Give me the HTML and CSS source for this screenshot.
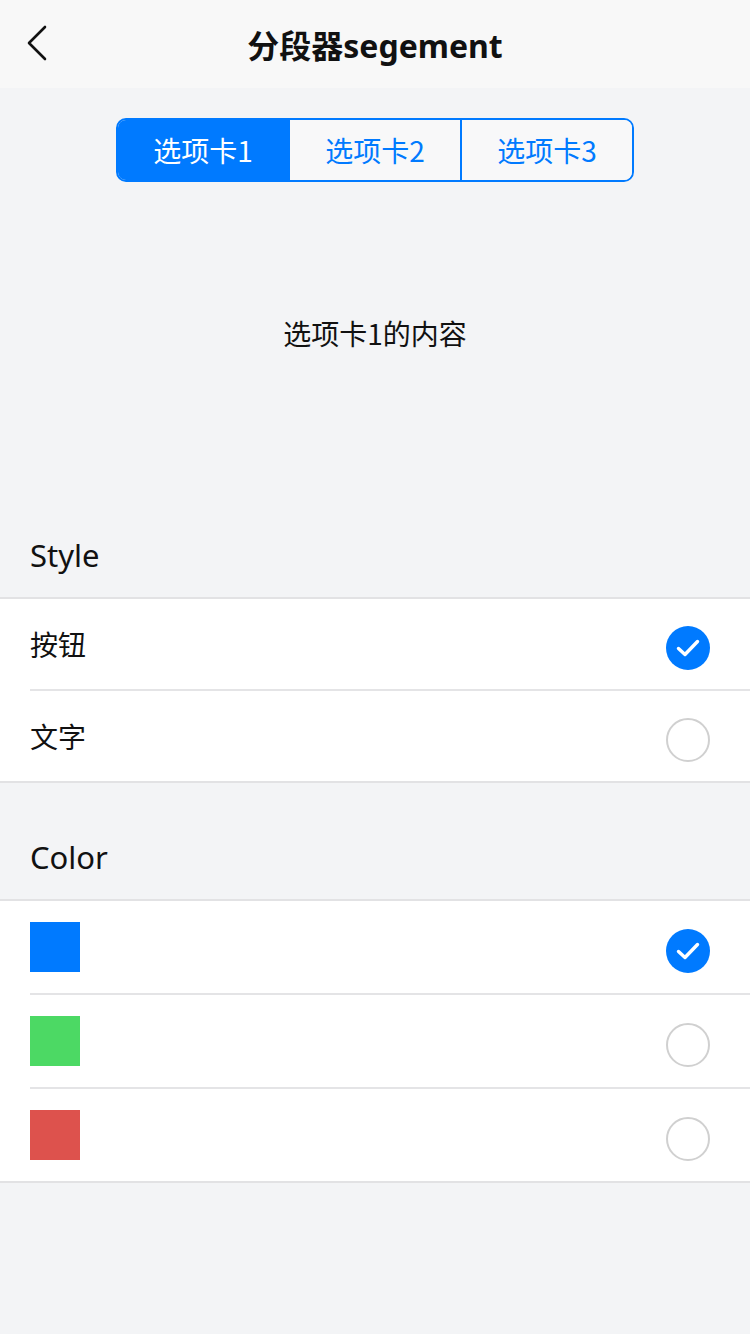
FILE: index.html
```html
<!DOCTYPE html>
<html lang="zh-CN">
<head>
<meta charset="utf-8">
<title>分段器segement</title>
<link rel="stylesheet" href="styles.css">
</head>
<body>
<div class="page">
  <header class="navbar">
    <span class="back">
      <svg width="24" height="36" viewBox="0 0 24 36"><path d="M19 2 L3 18 L19 34" fill="none" stroke="#111" stroke-width="2.6" stroke-linecap="round" stroke-linejoin="round"/></svg>
    </span>
    <h1 class="title">分段器segement</h1>
  </header>

  <div class="segment-wrap">
    <div class="segment">
      <div class="seg-item active">选项卡1</div>
      <div class="seg-item">选项卡2</div>
      <div class="seg-item">选项卡3</div>
    </div>
  </div>

  <div class="content">选项卡1的内容</div>

  <div class="section-title">Style</div>
  <ul class="list">
    <li class="row">
      <span class="label">按钮</span>
      <span class="radio checked"><svg width="44" height="44" viewBox="0 0 44 44"><path d="M12.5 22.5 L19 28.5 L31.5 15.5" fill="none" stroke="#fff" stroke-width="3.4" stroke-linecap="round" stroke-linejoin="round"/></svg></span>
    </li>
    <li class="row">
      <span class="label">文字</span>
      <span class="radio"></span>
    </li>
  </ul>

  <div class="section-title">Color</div>
  <ul class="list">
    <li class="row tall">
      <span class="swatch blue"></span>
      <span class="radio checked"><svg width="44" height="44" viewBox="0 0 44 44"><path d="M12.5 22.5 L19 28.5 L31.5 15.5" fill="none" stroke="#fff" stroke-width="3.4" stroke-linecap="round" stroke-linejoin="round"/></svg></span>
    </li>
    <li class="row tall">
      <span class="swatch green"></span>
      <span class="radio"></span>
    </li>
    <li class="row tall">
      <span class="swatch red"></span>
      <span class="radio"></span>
    </li>
  </ul>
</div>
</body>
</html>
```

FILE: styles.css
```css
* { box-sizing: border-box; }
html, body {
  margin: 0;
  padding: 0;
  background: #f3f4f6;
}
body {
  font-family: "Noto Sans", "Noto Sans CJK SC", sans-serif;
  color: #111;
}
.page {
  width: 750px;
  min-height: 1334px;
  background: #f3f4f6;
}
.navbar {
  height: 88px;
  background: #f8f8f8;
  display: flex;
  align-items: center;
  justify-content: center;
  position: relative;
}
.back {
  position: absolute;
  left: 26px;
  top: 25px;
  width: 24px;
  height: 36px;
  display: flex;
}
.title {
  margin: 0;
  font-size: 32px;
  font-weight: 700;
  letter-spacing: 0;
  line-height: 1;
  padding-top: 4px;
}
.segment-wrap {
  padding-top: 30px;
  display: flex;
  justify-content: center;
}
.segment {
  display: flex;
  width: 518px;
  height: 64px;
  border: 2px solid #007aff;
  border-radius: 10px;
  overflow: hidden;
}
.seg-item {
  flex: 1;
  display: flex;
  align-items: center;
  justify-content: center;
  font-size: 28px;
  color: #007aff;
  background: #f8f8f9;
  font-family: "Noto Sans CJK SC", sans-serif;
}
.seg-item + .seg-item {
  border-left: 2px solid #007aff;
}
.seg-item.active {
  background: #007aff;
  color: #fff;
}
.content {
  height: 299px;
  display: flex;
  align-items: center;
  justify-content: center;
  font-size: 28px;
  padding-top: 2px;
  font-family: "Noto Sans CJK SC", sans-serif;
}
.section-title {
  height: 116px;
  padding: 54px 30px 0;
  font-size: 31px;
  line-height: 40px;
  color: #111;
}
.list {
  list-style: none;
  margin: 0;
  padding: 0 0 0 30px;
  background: #fff;
  border-top: 2px solid #e2e2e4;
  border-bottom: 2px solid #e2e2e4;
}
.row {
  box-sizing: content-box;
  height: 90px;
  display: flex;
  align-items: center;
  justify-content: space-between;
  padding-right: 40px;
}
.row.tall {
  height: 92px;
}
.row + .row {
  border-top: 2px solid #e4e4e6;
}
.label {
  font-size: 28px;
  font-family: "Noto Sans CJK SC", sans-serif;
}
.radio {
  width: 44px;
  height: 44px;
  margin-top: 7px;
  border-radius: 50%;
  border: 2px solid #d0d0d0;
  display: flex;
}
.radio.checked {
  border: none;
  background: #007aff;
}
.swatch {
  width: 50px;
  height: 50px;
}
.swatch.blue { background: #007aff; }
.swatch.green { background: #4cd964; }
.swatch.red { background: #dd524d; }
```
